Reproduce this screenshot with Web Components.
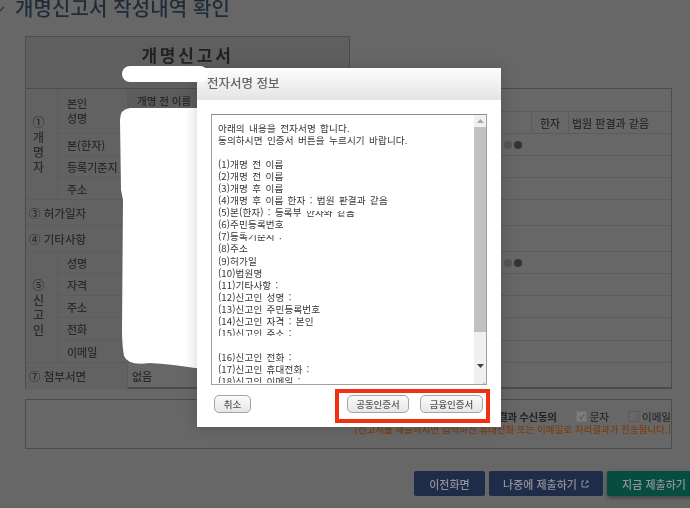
<!DOCTYPE html>
<html lang="ko">
<head>
<meta charset="utf-8">
<title>개명신고서 작성내역 확인</title>
<style>
    html, body { margin: 0; height: 100%; overflow: hidden; background: #676767; }
    body { font-family: "Noto Sans CJK KR", "Noto Sans", sans-serif; }
</style>
</head>
<body>
<app-page>
    <page-title>개명신고서 작성내역 확인</page-title>
    <report-form></report-form>
    <consent-box></consent-box>
    <action-bar></action-bar>
    <redaction-marks></redaction-marks>
    <sign-dialog></sign-dialog>
    <redaction-pill></redaction-pill>
</app-page>

<script>
class AppPage extends HTMLElement {
    constructor() {
        super();
        this.attachShadow({ mode: 'open' });
        this.shadowRoot.innerHTML = `
            <style>
                :host {
                    display: flex;
                    flex-direction: column;
                    position: relative;
                    width: 690px;
                    height: 508px;
                    overflow: hidden;
                    background: #676767;
                    filter: blur(0.4px);
                }
            </style>
            <slot></slot>
        `;
    }
}

class PageTitle extends HTMLElement {
    constructor() {
        super();
        this.attachShadow({ mode: 'open' });
        this.shadowRoot.innerHTML = `
            <style>
                :host {
                    display: flex;
                    align-items: center;
                    gap: 10px;
                    height: 36px;
                    box-sizing: border-box;
                    padding-bottom: 20px;
                    color: #1f2b38;
                    font-size: 20px;
                    font-weight: 500;
                    line-height: 16px;
                    letter-spacing: 0.1px;
                    white-space: nowrap;
                }
                svg { flex: none; width: 5px; height: 8px; }
            </style>
            <svg viewBox="0 0 5 8"><path d="M0 7 L4 3" fill="none" stroke="#2b3e52" stroke-width="1.6"/></svg>
            <slot></slot>
        `;
    }
}

class ReportForm extends HTMLElement {
    constructor() {
        super();
        this.attachShadow({ mode: 'open' });
        this._rows = [23, 22, 22, 22, 22, 26, 26, 22, 22, 22, 23, 22, 26];
        this.render();
    }

    render() {
        const dots = '<i class="dot dim"></i><i class="dot"></i>';
        this.shadowRoot.innerHTML = `
            <style>
                :host {
                    display: block;
                    margin-left: 25px;
                    width: 647px;
                    color: #2a2a2a;
                    font-size: 11px;
                    font-weight: 500;
                }
                .caption {
                    box-sizing: border-box;
                    width: 325px;
                    height: 53px;
                    padding-top: 3px;
                    border: 1px solid #4c4c4c;
                    border-bottom: 0;
                    background: #5f5f5f;
                    color: #222;
                    font-size: 17px;
                    font-weight: 700;
                    line-height: 30px;
                    letter-spacing: 2.8px;
                    text-align: center;
                }
                .grid {
                    display: grid;
                    box-sizing: border-box;
                    height: 301px;
                    grid-template-columns: 32px 70px 403px 38px 1fr;
                    grid-template-rows: ${this._rows.map(h => h + 'px').join(' ')};
                    border: 1px solid #4c4c4c;
                    border-bottom-width: 2px;
                    margin-top: -1px;
                }
                .cell {
                    display: flex;
                    align-items: center;
                    box-sizing: border-box;
                    border-bottom: 1px solid #5c5c5c;
                    min-width: 0;
                }
                .label { background: #626262; padding-left: 9px; border-right: 1px solid #5c5c5c; }
                .group { background: #626262; border-right: 1px solid #5c5c5c; flex-direction: column; justify-content: center; padding-right: 6px; font-size: 12px; line-height: 15px; text-align: center; }
                .wide { grid-column: 1 / 3; background: #626262; padding-left: 3px; border-right: 1px solid #5c5c5c; font-size: 11.5px; }
                .val { grid-column: 3 / 6; padding-left: 4px; }
                .head { background: linear-gradient(to right, #5c5c5c 70px, transparent 70px); font-size: 10.5px; color: #262626; padding-left: 9px; }
                .kanji { justify-content: center; border-left: 1px solid #5c5c5c; border-right: 1px solid #5c5c5c; }
                .last { border-bottom: 0; }
                .dot { width: 8px; height: 8px; border-radius: 50%; background: #333; margin-right: 2px; }
                .dot.dim { background: #565656; }
            </style>
            <div class="caption">개명신고서</div>
            <div class="grid">
                <div class="cell group" style="grid-row: 1 / 6">①<br>개<br>명<br>자</div>
                <div class="cell label" style="grid-row: 1 / 3; line-height: 15px">본인<br>성명</div>
                <div class="cell head" style="grid-column: 3 / 6">개명 전 이름</div>
                <div class="cell val" style="grid-column: 3 / 4"></div>
                <div class="cell kanji">한자</div>
                <div class="cell" style="padding-left: 3px">법원 판결과 같음</div>
                <div class="cell label">본(한자)</div>
                <div class="cell val" style="padding-left: 376px">${dots}</div>
                <div class="cell label">등록기준지</div>
                <div class="cell val"></div>
                <div class="cell label">주소</div>
                <div class="cell val"></div>
                <div class="cell wide">③ 허가일자</div>
                <div class="cell val"></div>
                <div class="cell wide">④ 기타사항</div>
                <div class="cell val"></div>
                <div class="cell group" style="grid-row: 8 / 13">⑤<br>신<br>고<br>인</div>
                <div class="cell label">성명</div>
                <div class="cell val" style="padding-left: 376px">${dots}</div>
                <div class="cell label">자격</div>
                <div class="cell val"></div>
                <div class="cell label">주소</div>
                <div class="cell val"></div>
                <div class="cell label">전화</div>
                <div class="cell val"></div>
                <div class="cell label">이메일</div>
                <div class="cell val"></div>
                <div class="cell wide last">⑦ 첨부서면</div>
                <div class="cell val last">없음</div>
            </div>
        `;
    }
}

class ConsentBox extends HTMLElement {
    constructor() {
        super();
        this.attachShadow({ mode: 'open' });
        this.shadowRoot.innerHTML = `
            <style>
                :host {
                    display: flex;
                    flex-direction: column;
                    align-items: flex-end;
                    box-sizing: border-box;
                    width: 647px;
                    height: 50px;
                    margin: 10px 0 0 25px;
                    padding: 9px 0 0 0;
                    border: 1px solid #4c4c4c;
                    color: #222;
                    font-size: 10.5px;
                    font-weight: 500;
                    white-space: nowrap;
                }
                .line { display: flex; align-items: center; height: 15px; }
                .agree { font-weight: 700; letter-spacing: -0.3px; }
                .box { display: flex; width: 9px; height: 9px; border: 1px solid #5a5a5a; border-radius: 1px; margin-right: 3px; }
                .box.on { background: #7d7d7d; border-color: #707070; }
                .box svg { width: 9px; height: 9px; }
                .opt { display: flex; align-items: center; margin-left: 19px; color: #2b2b2b; }
                .note { color: #7c3d12; font-size: 9.5px; line-height: 11px; }
            </style>
            <div class="line"><span class="agree">처리결과 수신동의</span>
                <span class="opt"><span class="box on"><svg viewBox="0 0 9 9"><path d="M2 4.5 L4 7 L7.5 2" fill="none" stroke="#5c5c5c" stroke-width="1.2"/></svg></span>문자</span>
                <span class="opt"><span class="box"></span>이메일</span>
            </div>
            <div class="note">[신고서를 제출하시면 입력하신 휴대전화 또는 이메일로 처리결과가 전송됩니다.]</div>
        `;
    }
}

class ActionBar extends HTMLElement {
    constructor() {
        super();
        this.attachShadow({ mode: 'open' });
        this.shadowRoot.innerHTML = `
            <style>
                :host {
                    display: flex;
                    gap: 4px;
                    margin: 22px 0 0 414px;
                    width: 300px;
                    height: 25px;
                    color: #8f939b;
                    font-size: 11px;
                    font-weight: 500;
                }
                div {
                    display: flex;
                    align-items: center;
                    justify-content: center;
                    flex: none;
                    border-radius: 2px;
                    background: #1f2c49;
                }
                .green { background: #074c41; box-shadow: 0 2px 4px rgba(0, 0, 0, .35); }
                svg { width: 8px; height: 8px; margin-left: 4px; }
            </style>
            <div style="width: 71px">이전화면</div>
            <div style="width: 114px">나중에 제출하기<svg viewBox="0 0 8 8"><path d="M3 1H1V7H7V5M4 4L7 1M5 1H7V3" fill="none" stroke="#8f939b"/></svg></div>
            <div class="green" style="width: 94px">지금 제출하기</div>
        `;
    }
}

// the white marks that hide personal data in the screenshot
class RedactionMarks extends HTMLElement {
    constructor() {
        super();
        this.attachShadow({ mode: 'open' });
        this.shadowRoot.innerHTML = `
            <style>
                :host { position: absolute; inset: 0; pointer-events: none; }
                svg { display: block; width: 100%; height: 100%; }
            </style>
            <svg viewBox="0 0 690 508">
                <path fill="#fff" d="M130 108 H240 V368 H195 Q170 364 150 363 Q128 366 124 356 Q122 345 122 330 L123 200 L121 190 L120 120 Q120 109 130 108 Z"/>
            </svg>
        `;
    }
}

class RedactionPill extends HTMLElement {
    constructor() {
        super();
        this.attachShadow({ mode: 'open' });
        this.shadowRoot.innerHTML = `
            <style>
                :host {
                    position: absolute;
                    left: 122px;
                    top: 66px;
                    width: 86px;
                    height: 16px;
                    border-radius: 8px;
                    background: #fff;
                }
            </style>
        `;
    }
}

class SignDialog extends HTMLElement {
    constructor() {
        super();
        this.attachShadow({ mode: 'open' });
        this._lines = [
            '아래의 내용을 전자서명 합니다.',
            '동의하시면 인증서 버튼을 누르시기 바랍니다.',
            '',
            '(1)개명 전 이름',
            '(2)개명 전 이름',
            '(3)개명 후 이름',
            '(4)개명 후 이름 한자 : 법원 판결과 같음',
            '(5)본(한자) : 등록부 한자와 같음',
            '(6)주민등록번호',
            '(7)등록기준지 :',
            '(8)주소',
            '(9)허가일',
            '(10)법원명',
            '(11)기타사항 :',
            '(12)신고인 성명 :',
            '(13)신고인 주민등록번호',
            '(14)신고인 자격 : 본인',
            '(15)신고인 주소 :',
            '',
            '(16)신고인 전화 :',
            '(17)신고인 휴대전화 :',
            '(18)신고인 이메일 :'
        ];
        this.render();
    }

    render() {
        this.shadowRoot.innerHTML = `
            <style>
                :host {
                    display: flex;
                    flex-direction: column;
                    position: absolute;
                    left: 197px;
                    top: 68px;
                    width: 304px;
                    height: 359px;
                    background: #fff;
                    box-shadow: 0 0 14px rgba(0, 0, 0, .18);
                }
                header {
                    flex: none;
                    height: 32px;
                    box-sizing: border-box;
                    padding-left: 10px;
                    background: linear-gradient(#fdfdfd, #e4e4e4);
                    color: #666;
                    font-size: 12.5px;
                    font-weight: 500;
                    line-height: 30px;
                }
                .area {
                    display: flex;
                    position: relative;
                    flex: none;
                    box-sizing: border-box;
                    width: 276px;
                    height: 271px;
                    margin: 14px 0 0 14px;
                    border: 1px solid #a0a0a0;
                    border-top-color: #8c8c8c;
                    overflow: hidden;
                }
                .text {
                    flex: 1;
                    padding: 7px 0 0 6px;
                    color: #333;
                    font-size: 9.6px;
                    line-height: 12.05px;
                    letter-spacing: 0.1px;
                    word-spacing: 1.5px;
                    white-space: pre;
                }
                .patch { position: absolute; background: #fff; }
                .bar {
                    display: flex;
                    flex-direction: column;
                    flex: none;
                    width: 12px;
                    background: #f0f0f0;
                }
                .arrow { flex: none; display: flex; align-items: center; justify-content: center; height: 12px; }
                .thumb { flex: none; height: 205px; background: #c1c1c1; }
                .gap { flex: 1; }
                .corner { flex: none; height: 12px; background: #f0f0f0; }
                footer {
                    display: flex;
                    justify-content: space-between;
                    align-items: flex-start;
                    margin-top: 4px;
                    padding: 6px 11px 0 17px;
                }
                .primary {
                    display: flex;
                    gap: 11px;
                    box-sizing: border-box;
                    width: 155px;
                    height: 34px;
                    margin-top: -6px;
                    padding: 2px 0 0 8px;
                    border: 4px solid #f2300f;
                }
            </style>
            <header>전자서명 정보</header>
            <div class="area">
                <div class="text">${this._lines.join('\n')}</div>
                <i class="patch" style="left: 90px; top: 92px; width: 60px; height: 4px"></i>
                <i class="patch" style="left: 33px; top: 116px; width: 45px; height: 4px"></i>
                <i class="patch" style="left: 4px; top: 221px; width: 130px; height: 17px"></i>
                <i class="patch" style="left: 4px; top: 268px; width: 130px; height: 3px"></i>
                <div class="bar" style="margin-left: auto">
                    <div class="arrow"><svg width="7" height="4" viewBox="0 0 7 4"><path d="M3.5 0 L7 4 H0 Z" fill="#a8a8a8"/></svg></div>
                    <div class="thumb"></div>
                    <div class="gap"></div>
                    <div class="arrow"><svg width="7" height="4" viewBox="0 0 7 4"><path d="M0 0 H7 L3.5 4 Z" fill="#444"/></svg></div>
                    <div class="corner"><svg width="12" height="12" viewBox="0 0 12 12"><path d="M3 11 L11 3 M6 11 L11 6 M9 11 L11 9" stroke="#aaa" fill="none"/></svg></div>
                </div>
            </div>
            <footer>
                <dialog-button style="width: 37px">취소</dialog-button>
                <div class="primary">
                    <dialog-button style="width: 62px">공동인증서</dialog-button>
                    <dialog-button style="width: 63px">금융인증서</dialog-button>
                </div>
            </footer>
        `;
    }
}

class DialogButton extends HTMLElement {
    constructor() {
        super();
        this.attachShadow({ mode: 'open' });
        this.shadowRoot.innerHTML = `
            <style>
                :host {
                    display: flex;
                    align-items: center;
                    justify-content: center;
                    flex: none;
                    box-sizing: border-box;
                    height: 18px;
                    border: 1px solid #a4a4a4;
                    border-radius: 5px;
                    background: linear-gradient(#fbfbfb, #e6e6e6);
                    color: #555;
                    font-size: 9.5px;
                    font-weight: 500;
                }
            </style>
            <slot></slot>
        `;
    }
}

customElements.define('app-page', AppPage);
customElements.define('page-title', PageTitle);
customElements.define('report-form', ReportForm);
customElements.define('consent-box', ConsentBox);
customElements.define('action-bar', ActionBar);
customElements.define('redaction-marks', RedactionMarks);
customElements.define('redaction-pill', RedactionPill);
customElements.define('sign-dialog', SignDialog);
customElements.define('dialog-button', DialogButton);
</script>
</body>
</html>
